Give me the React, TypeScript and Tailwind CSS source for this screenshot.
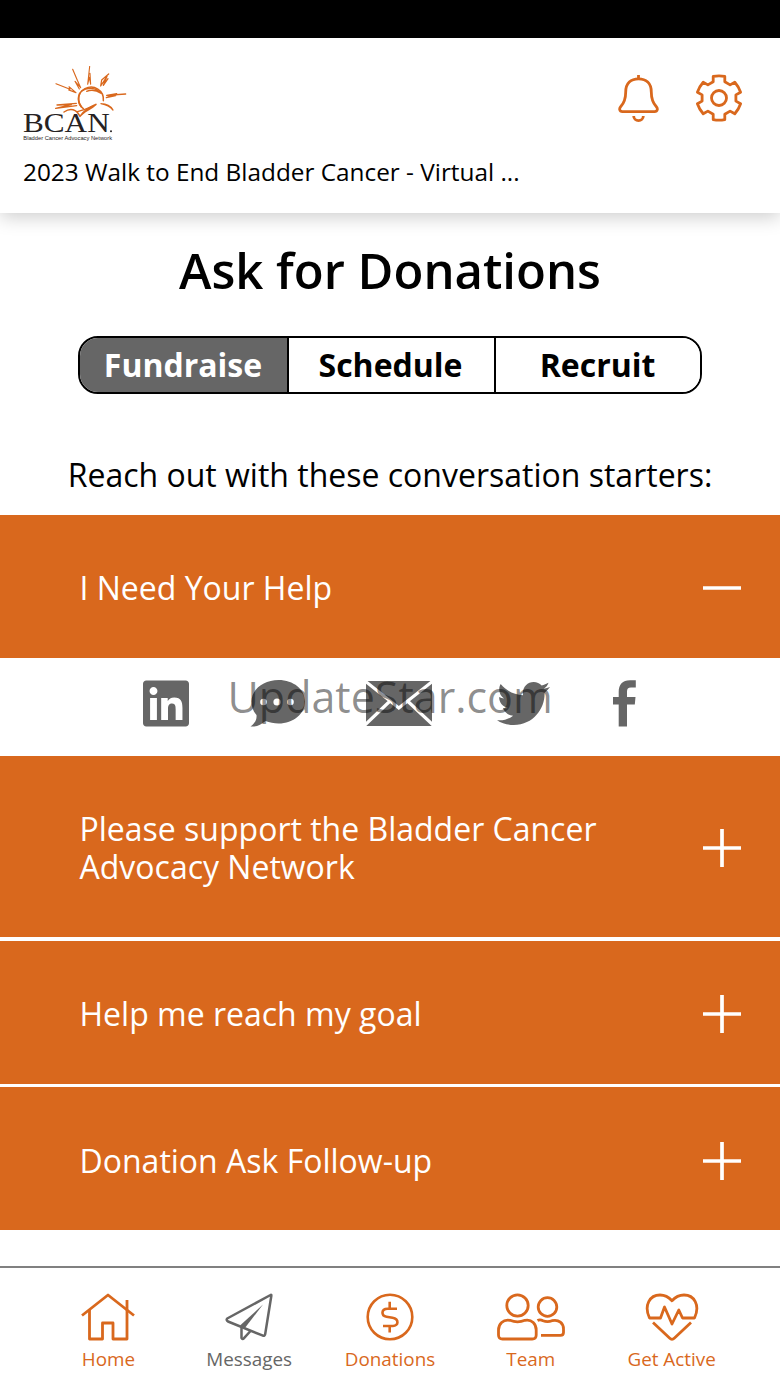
import { useState } from 'react';
import type { ReactNode } from 'react';
import { FaLinkedin, FaTwitter } from 'react-icons/fa';

const ORANGE = '#d9681d';

function Logo() {
  return (
    <svg width="104" height="76" viewBox="69 108 312 228" fill="none" stroke={ORANGE} strokeLinecap="round" strokeLinejoin="round">
      <path d="M250 236C230 222 230 189 255 176C281 163 313 180 310 212" strokeWidth="4.5" />
      <path d="M244 184C262 170 288 172 304 190C290 181 274 178 260 184" strokeWidth="4" />
      <path d="M239 190C234 202 235 218 244 230" strokeWidth="5" />
      <path d="M168 161L210 178L207 170L228 188L206 180L226 186" strokeWidth="3.2" />
      <path d="M218 118L232 151L242 173L225 154L238 177" strokeWidth="3.4" />
      <path d="M269 109L265 146L263 163L268 142L272 163L270 130" strokeWidth="3.2" />
      <path d="M326 132L305 150L302 168L321 139L310 166L324 146" strokeWidth="3.8" />
      <path d="M377 192L320 196L350 191L319 203L347 197" strokeWidth="3.8" />
      <path d="M229 220L171 225L214 224L167 235L230 227" strokeWidth="4" />
      <path d="M192 246C212 232 229 238 240 259C252 240 268 233 288 223C270 240 252 243 240 259" strokeWidth="4.5" />
      <path d="M232 245C248 242 264 234 280 229" strokeWidth="4" />
      <path d="M303 221C320 221 332 228 339 240C329 228 318 224 303 221" strokeWidth="4" />
      <g stroke="none" fill="#262223">
        <text x="69" y="307" textLength="260" lengthAdjust="spacingAndGlyphs" fontSize="80" fontFamily="'Liberation Serif', serif">BCAN</text>
        <circle cx="333" cy="304" r="3" />
        <text x="70" y="331" textLength="266" lengthAdjust="spacingAndGlyphs" fontSize="18.5" fontFamily="'Liberation Sans', sans-serif">Bladder Cancer Advocacy Network</text>
      </g>
    </svg>
  );
}

function BellIcon() {
  return (
    <svg width="42" height="48" viewBox="0 0 42 48" fill="none" stroke={ORANGE} strokeWidth="2.8">
      <path d="M20.5 1V4.5" />
      <path d="M4.5 37.6H36.5C39.8 37.6 40 34.5 38.2 32.5C34.5 28.5 33.3 25 33.3 18C33.3 9 28 4.8 20.5 4.8C13 4.8 7.7 9 7.7 18C7.7 25 6.5 28.5 2.8 32.5C1 34.5 1.2 37.6 4.5 37.6Z" />
      <path d="M15.7 42A4.8 4.6 0 0 0 25.3 42" />
    </svg>
  );
}

function GearIcon() {
  return (
    <svg width="48" height="48" viewBox="-24 -24 48 48" fill="none" stroke={ORANGE} strokeWidth="2.8" strokeLinejoin="round">
      <path d="M-5.8 -16.2V-21.6Q0 -22.8 5.8 -21.6V-16.2L11.1 -13.1L15.8 -15.8Q19.7 -11.4 21.6 -5.8L16.9 -3.1V3.1L21.6 5.8Q19.7 11.4 15.8 15.8L11.1 13.1L5.8 16.2V21.6Q0 22.8 -5.8 21.6V16.2L-11.1 13.1L-15.8 15.8Q-19.7 11.4 -21.6 5.8L-16.9 3.1V-3.1L-21.6 -5.8Q-19.7 -11.4 -15.8 -15.8L-11.1 -13.1Z" />
      <circle r="7.5" />
    </svg>
  );
}

function ChatIcon() {
  return (
    <svg width="56" height="47" viewBox="0 0 56 47">
      <path d="M28.5 0C43.5 0 55 9.5 55 21.5S43.5 43.5 28.5 43.5C24 43.5 19.5 42.5 15.5 41C11 45 6 47 0.5 46.5C5 43.5 7 39.5 6.5 35C3 31 1.5 26.5 1.5 21.5C1.5 9.5 13.5 0 28.5 0Z" fill="#666" />
      <circle cx="13.5" cy="22" r="3.3" fill="#fff" />
      <circle cx="27" cy="22" r="3.6" fill="#fff" />
      <circle cx="40.5" cy="22" r="3.3" fill="#fff" />
    </svg>
  );
}

function MailIcon() {
  return (
    <svg width="66" height="45" viewBox="0 0 66 45">
      <path d="M0 0H66V45H0Z" fill="#666" />
      <path d="M-1 0L32.8 27L67 0M23.5 20.5L-1 44M42 20.5L67 44" fill="none" stroke="#fff" strokeWidth="3.2" />
    </svg>
  );
}

function FacebookIcon() {
  return (
    <svg width="23" height="47" viewBox="0 0 23 47" fill="#666">
      <path d="M5.7 46.5V24.5H0V17H5.7V12C5.7 4.5 9.5 0.3 17 0.3H22.8V7.5H18C15 7.5 14 8.8 14 11.5V17H22.5L21.8 24.5H14V46.5Z" />
    </svg>
  );
}

function HomeIcon() {
  return (
    <svg width="54" height="48" viewBox="0 0 54 48" fill="none" stroke={ORANGE} strokeWidth="2.8" strokeLinejoin="round">
      <path d="M1 22.5L27 2L53 22.5" />
      <path d="M8.5 17V46H21.5V30H32V46H46V7" />
    </svg>
  );
}

function PlaneIcon() {
  return (
    <svg width="48" height="48" viewBox="0 0 48 48" fill="none" stroke="#666" strokeWidth="2.5" strokeLinejoin="round">
      <path d="M45.5 2L2.2 25.5Q0.8 27 3 28.5L38 42.7Q39.8 43.2 40.2 41L46.3 3Q46.5 1.3 45.5 2Z" />
      <path d="M16.5 34V45Q17.5 47 19 45.2L25.5 38" />
      <path d="M38 11.5L15 32.5L19.5 35.5Z" fill="#666" stroke="none" />
    </svg>
  );
}

function DollarIcon() {
  return (
    <svg width="48" height="48" viewBox="0 0 48 48" fill="none" stroke={ORANGE} strokeWidth="2.6">
      <circle cx="24" cy="24" r="22.3" />
      <path d="M31 15.700H21.500C15 15.700 15 23 20.500 23.700L26.500 24.700C33.500 26 32.500 33 27 33H17M23.700 8.700V15.500M23.700 33V39.500" />
    </svg>
  );
}

function TeamIcon() {
  return (
    <svg width="68" height="48" viewBox="0 0 68 48" fill="none" stroke={ORANGE} strokeWidth="2.8">
      <circle cx="20.5" cy="12.5" r="10.7" />
      <path d="M13 27.3Q20.5 30.5 28 27.3C35 26 39.2 31 39.2 37V42Q39.2 46 35.2 46H5.5Q1.5 46 1.5 42V37C1.5 31 6 26 13 27.3Z" />
      <circle cx="50.5" cy="14" r="9.3" />
      <path d="M40.5 27.5Q43 26 46 27.7Q50.5 29.5 55 27.7C62 26 66.5 30.5 66.5 36V39.5Q66.5 42.3 63.5 42.3H44" />
    </svg>
  );
}

function HeartIcon() {
  return (
    <svg width="54" height="48" viewBox="0 0 54 48" fill="none" stroke={ORANGE} strokeWidth="2.8" strokeLinejoin="round">
      <path d="M15.500 25H4.500C-1.500 12 5 2 15 2C20.500 2 24.500 5 27 7.800C29.500 5 33.500 2 39 2C49 2 55.500 12 49.500 25H37.500L33.800 17L27 31L19.500 14L15.500 25H4.500" />
      <path d="M8 29.5L24.5 45Q27 47.5 29.5 45L46 29.5" />
    </svg>
  );
}

function ToggleMark({ open }: { open: boolean }) {
  return (
    <svg width="38" height="38" viewBox="0 0 38 38" stroke="#fff" strokeWidth="3.7" className="mt-[3px]">
      <path d="M0 19H38" />
      {!open && <path d="M19 0V38" />}
    </svg>
  );
}

const tabs = [
  { label: 'Fundraise', style: 'w-[207px] pr-px' },
  { label: 'Schedule', style: 'w-[207px] border-l-2 border-black pr-[2px]' },
  { label: 'Recruit', style: 'flex-1 border-l-2 border-black pr-px' },
];

const starters = [
  { title: 'I Need Your Help', row: 'h-[143px] pb-px' },
  { title: 'Please support the Bladder Cancer Advocacy Network', row: 'h-[181px] pb-px' },
  { title: 'Help me reach my goal', row: 'h-[143px] mt-[3.5px] pt-px' },
  { title: 'Donation Ask Follow-up', row: 'h-[143px] mt-[3.5px] pt-px' },
];

const navItems: { label: string; icon: ReactNode; color: string }[] = [
  { label: 'Home', icon: <HomeIcon />, color: 'text-[#d9681d]' },
  { label: 'Messages', icon: <PlaneIcon />, color: 'text-[#666]' },
  { label: 'Donations', icon: <DollarIcon />, color: 'text-[#d9681d]' },
  { label: 'Team', icon: <TeamIcon />, color: 'text-[#d9681d]' },
  { label: 'Get Active', icon: <HeartIcon />, color: 'text-[#d9681d]' },
];

function ShareRow() {
  return (
    <div className="relative flex h-[98px] items-start bg-white pt-[22px] pl-[143px]">
      <div className="flex h-[47px] items-center">
        <FaLinkedin className="h-[53px] w-[46px] text-[#666]" />
        <div className="ml-[61px]"><ChatIcon /></div>
        <div className="ml-[60px]"><MailIcon /></div>
        <FaTwitter className="ml-[65px] h-[53px] w-[53px] text-[#666]" />
        <div className="ml-[63px]"><FacebookIcon /></div>
      </div>
      <span className="absolute top-[9px] left-[227.5px] text-[43px] leading-[60px] whitespace-nowrap text-black/45">
        UpdateStar.com
      </span>
    </div>
  );
}

export default function App() {
  const [activeTab, setActiveTab] = useState(0);
  const [openId, setOpenId] = useState<number | null>(0);

  return (
    <div className="flex h-[1387px] w-[780px] flex-col overflow-hidden bg-white font-['Open_Sans','Noto_Sans',sans-serif] text-black">
      <div className="h-[38px] shrink-0 bg-black" />

      <header className="h-[175px] shrink-0 bg-white px-[23px] pt-7 shadow-[0_4px_18px_rgba(0,0,0,0.2)]">
        <div className="flex items-start justify-between">
          <Logo />
          <div className="flex gap-[35px] pt-2 pr-[14px]">
            <BellIcon />
            <GearIcon />
          </div>
        </div>
        <p className="mt-[13px] text-[24.35px] leading-[34px] whitespace-nowrap">
          2023 Walk to End Bladder Cancer - Virtual ...
        </p>
      </header>

      <main className="flex-1">
        <h1 className="pt-6 text-center text-[49px] leading-[66px] font-semibold">Ask for Donations</h1>

        <div className="mx-auto mt-[33px] flex h-[58px] w-[624px] overflow-hidden rounded-[20px] border-2 border-black">
          {tabs.map((tab, i) => (
            <button
              key={tab.label}
              onClick={() => setActiveTab(i)}
              className={`text-[32px] leading-[44px] font-bold ${tab.style} ${activeTab === i ? 'bg-[#666] text-white' : 'bg-white'}`}
            >
              {tab.label}
            </button>
          ))}
        </div>

        <p className="mt-[59px] h-[62px] text-center text-[32px] leading-[44px]">
          Reach out with these conversation starters:
        </p>

        {starters.map((item, i) => (
          <div key={item.title}>
            <button
              onClick={() => setOpenId(openId === i ? null : i)}
              className={`flex w-full items-center justify-between bg-[#d9681d] pr-[39px] pl-[79.5px] text-left text-white ${item.row}`}
            >
              <span className="w-[540px] pt-[3px] text-[32px] leading-[38px]">{item.title}</span>
              <ToggleMark open={openId === i} />
            </button>
            {openId === i && <ShareRow />}
          </div>
        ))}
      </main>

      <nav className="grid h-[121px] shrink-0 grid-cols-5 border-t-2 border-[#808080] bg-white px-[38px] pt-[25px]">
        {navItems.map((item) => (
          <button key={item.label} className={`flex flex-col items-center ${item.color}`}>
            {item.icon}
            <span className="mt-[6px] text-[18.85px] leading-[25px] whitespace-nowrap">{item.label}</span>
          </button>
        ))}
      </nav>
    </div>
  );
}
